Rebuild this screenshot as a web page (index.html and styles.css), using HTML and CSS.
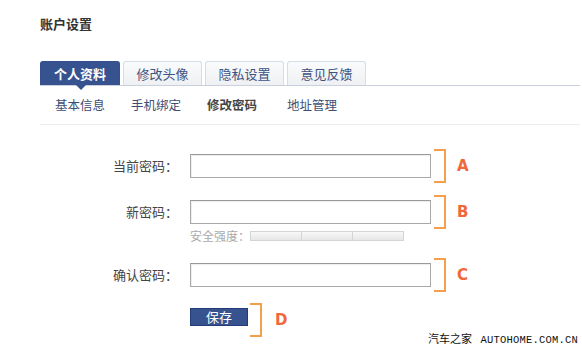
FILE: index.html
```html
<!DOCTYPE html>
<html lang="zh-CN">
<head>
<meta charset="UTF-8">
<title>账户设置</title>
<link rel="stylesheet" href="styles.css">
</head>
<body>

<div class="page">
  <h1 class="title">账户设置</h1>

  <div class="tabs">
    <a class="tab active">个人资料</a>
    <a class="tab">修改头像</a>
    <a class="tab">隐私设置</a>
    <a class="tab">意见反馈</a>
  </div>

  <div class="subnav">
    <a>基本信息</a>
    <a>手机绑定</a>
    <a class="current">修改密码</a>
    <a>地址管理</a>
  </div>

  <form class="form">
    <div class="row">
      <label class="label">当前密码：</label>
      <div class="field"><input type="password"></div>
      <span class="bracket"></span>
      <span class="mark">A</span>
    </div>

    <div class="row row-new">
      <label class="label">新密码：</label>
      <div class="field">
        <input type="password">
        <div class="strength">
          <span>安全强度：</span>
          <div class="meter"><i></i><i></i><i></i></div>
        </div>
      </div>
      <span class="bracket"></span>
      <span class="mark">B</span>
    </div>

    <div class="row row-confirm">
      <label class="label">确认密码：</label>
      <div class="field"><input type="password"></div>
      <span class="bracket"></span>
      <span class="mark">C</span>
    </div>

    <div class="row row-save">
      <span class="label"></span>
      <button type="button" class="save">保存</button>
      <span class="bracket"></span>
      <span class="mark">D</span>
    </div>
  </form>

  <div class="watermark">汽车之家 <span>AUTOHOME.COM.CN</span></div>
</div>

</body>
</html>
```

FILE: styles.css
```css
body {
  margin: 0;
  background: #fff;
  font-family: "Noto Sans CJK SC", "Liberation Sans", sans-serif;
  color: #444;
}

.page {
  position: relative;
  width: 582px;
  height: 352px;
  padding: 15px 2px 0 40px;
  box-sizing: border-box;
  overflow: hidden;
}

.title {
  margin: 0;
  font-size: 13px;
  line-height: 18px;
  font-weight: bold;
  color: #333;
}

/* top tabs */
.tabs {
  display: flex;
  gap: 3px;
  margin-top: 28px;
  border-bottom: 1px solid #c9d0dc;
}

.tab {
  position: relative;
  width: 79px;
  height: 24px;
  box-sizing: border-box;
  border: 1px solid #d8dce3;
  border-bottom: none;
  border-radius: 3px 3px 0 0;
  background: linear-gradient(#fafbfc, #eef0f3);
  color: #3e5383;
  font-size: 13px;
  line-height: 23px;
  text-align: center;
}

.tab.active {
  width: 80px;
  border-color: #34518d;
  background: #36538f;
  color: #fff;
  font-weight: bold;
}

.tab.active:after {
  content: "";
  position: absolute;
  left: 35px;
  bottom: -5px;
  border: 5px solid transparent;
  border-top-color: #36538f;
  border-bottom: none;
}

/* sub nav */
.subnav {
  display: flex;
  height: 38px;
  padding-left: 15px;
  border-bottom: 1px solid #ebebeb;
  font-size: 12.5px;
  line-height: 38px;
}

.subnav a {
  width: 76px;
  color: #3d4f74;
}

.subnav a:nth-child(3) { width: 80px; }

.subnav a.current {
  color: #444;
  font-weight: bold;
}

/* password form */
.form {
  padding-top: 24px;
}

.row {
  display: flex;
  align-items: flex-start;
}

.row-new { margin-top: 12px; }
.row-confirm { margin-top: 15px; }
.row-save { margin-top: 11px; }

.label {
  width: 138px;
  margin: 5px 12px 0 0;
  font-size: 13px;
  line-height: 24px;
  text-align: right;
  color: #444;
}

.field {
  width: 241px;
  margin-top: 5px;
}

.field input {
  display: block;
  width: 241px;
  height: 24px;
  box-sizing: border-box;
  margin: 0;
  border: 1px solid #a9a9a9;
  border-top-color: #999;
  box-shadow: inset 1px 1px 1px #eee;
  background: #fff;
}

.strength {
  display: flex;
  align-items: center;
  margin-top: 5px;
  font-size: 12px;
  line-height: 14px;
  color: #aaa;
}

.meter {
  display: flex;
  width: 152px;
  height: 8px;
  border: 1px solid #d4d4d4;
  background: linear-gradient(#f8f8f8, #e6e6e6);
}

.meter i {
  flex: 1;
  border-left: 1px solid #d4d4d4;
}

.meter i:first-child { border-left: none; }

.bracket {
  width: 10px;
  height: 30px;
  margin-left: 3px;
  border: 2px solid #f2a04c;
  border-left: none;
}

.mark {
  margin-left: 11px;
  font-family: "DejaVu Sans", sans-serif;
  font-size: 15px;
  font-weight: bold;
  line-height: 34px;
  color: #f0683a;
}

.save {
  width: 58px;
  height: 18px;
  margin: 5px 0 0 0;
  padding: 0;
  border: 1px solid #213c77;
  background: #36538f;
  color: #fff;
  font-family: "Noto Sans CJK SC", sans-serif;
  font-size: 13px;
  line-height: 16px;
}

.row-save .bracket { margin-left: 2px; }
.row-save .mark { margin-left: 13px; }

/* screenshot watermark */
.watermark {
  position: absolute;
  right: 4px;
  bottom: 6px;
  font-size: 11px;
  line-height: 12px;
  color: #111;
}

.watermark span {
  margin-left: 6px;
  font-family: "Liberation Mono", monospace;
  font-size: 10.5px;
  letter-spacing: 0.2px;
}
```
